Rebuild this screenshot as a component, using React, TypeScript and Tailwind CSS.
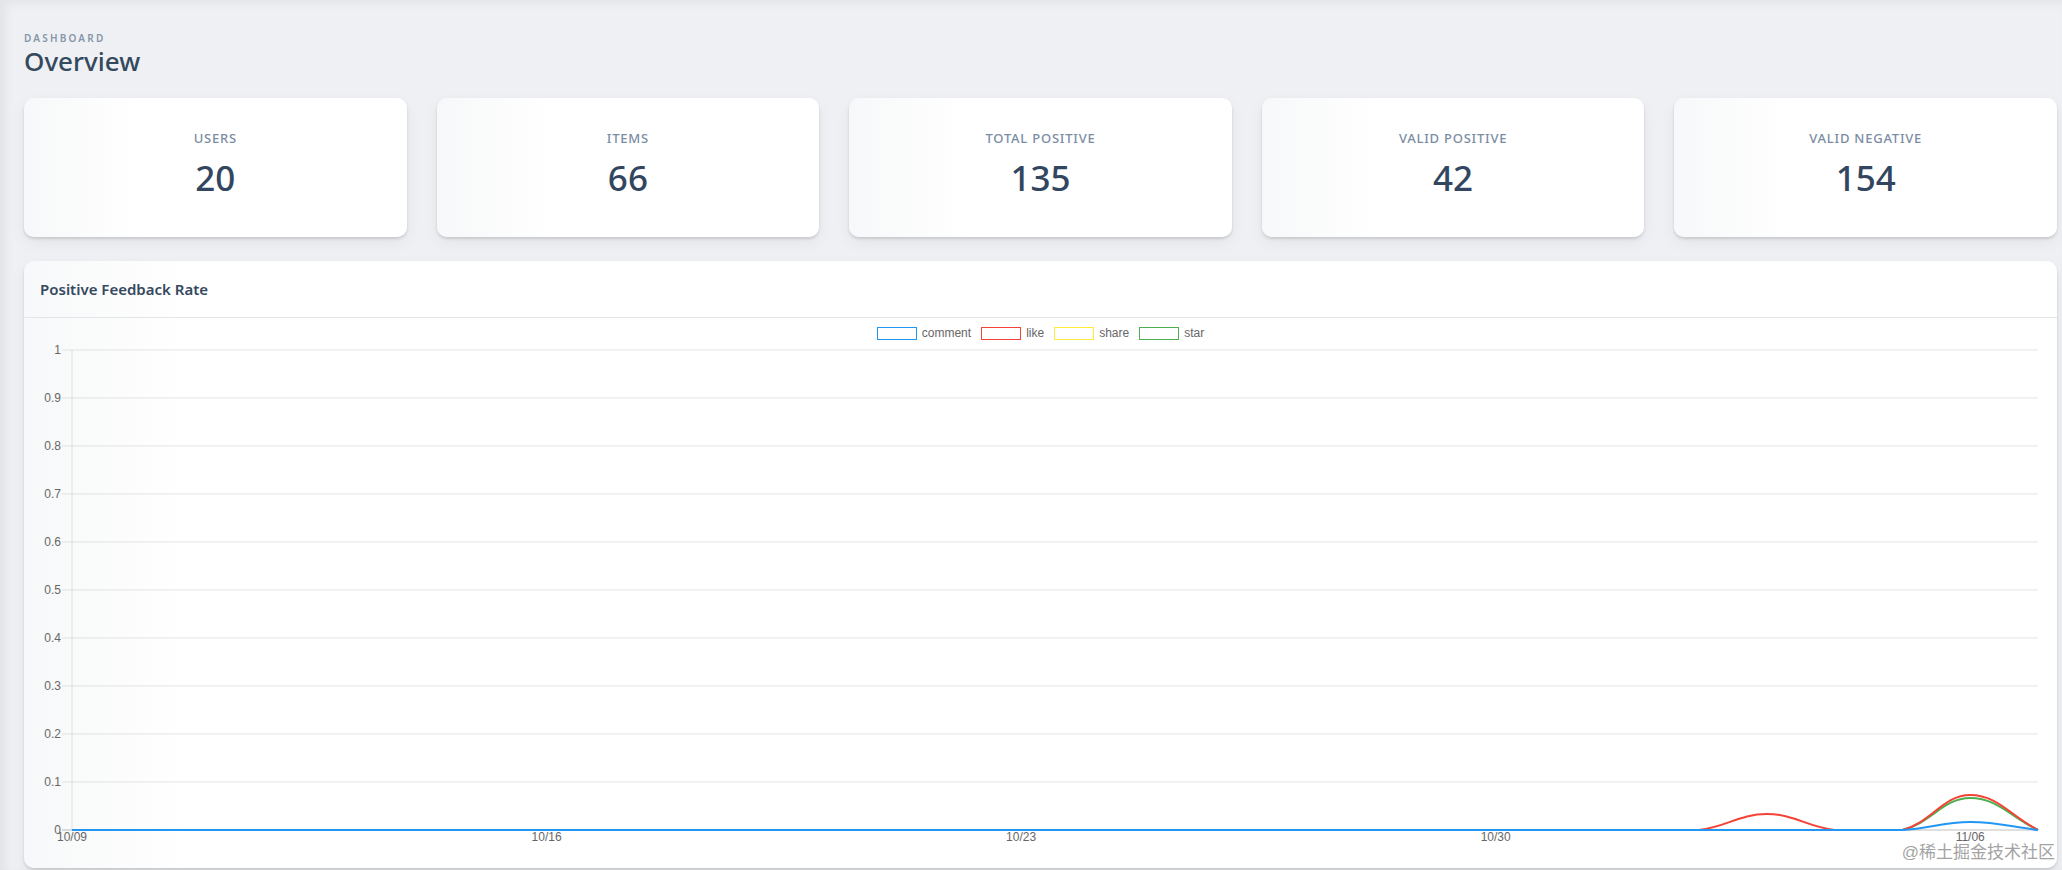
import React from "react";

const STATS = [
  { label: "Users", value: 20 },
  { label: "Items", value: 66 },
  { label: "Total Positive", value: 135 },
  { label: "Valid Positive", value: 42 },
  { label: "Valid Negative", value: 154 },
];

// 10/09 .. 11/07
const DAYS = 30;
const zeros = () => Array.from({ length: DAYS }, () => 0);

const SERIES = [
  { name: "comment", color: "#2196f3", data: (() => { const d = zeros(); d[28] = 0.0167; return d; })() },
  { name: "like", color: "#f44336", data: (() => { const d = zeros(); d[25] = 0.0333; d[28] = 0.073; return d; })() },
  { name: "share", color: "#ffeb3b", data: [] as number[] },
  { name: "star", color: "#4caf50", data: (() => { const d = zeros(); d[28] = 0.0667; return d; })() },
];

const X0 = 48;
const X1 = 2014;
const Y_TOP = 10;
const Y_BOT = 490;
const STEP = (X1 - X0) / (DAYS - 1);

const px = (i: number) => X0 + i * STEP;
const py = (v: number) => Y_BOT - v * (Y_BOT - Y_TOP);

// chart.js style spline, tension .4
function splinePath(values: number[]) {
  if (!values.length) return "";
  const pts = values.map((v, i) => ({ x: px(i), y: py(v) }));
  const t = 0.4;
  const ctrl = pts.map((cur, i) => {
    const prev = pts[i - 1] || cur;
    const next = pts[i + 1] || cur;
    const d01 = Math.hypot(cur.x - prev.x, cur.y - prev.y);
    const d12 = Math.hypot(next.x - cur.x, next.y - cur.y);
    let s01 = d01 / (d01 + d12);
    let s12 = d12 / (d01 + d12);
    if (isNaN(s01)) s01 = 0;
    if (isNaN(s12)) s12 = 0;
    const fa = t * s01;
    const fb = t * s12;
    const clamp = (y: number) => Math.min(Math.max(y, Y_TOP), Y_BOT);
    return {
      px: cur.x - fa * (next.x - prev.x),
      py: clamp(cur.y - fa * (next.y - prev.y)),
      nx: cur.x + fb * (next.x - prev.x),
      ny: clamp(cur.y + fb * (next.y - prev.y)),
    };
  });
  let d = `M${pts[0].x},${pts[0].y}`;
  for (let i = 1; i < pts.length; i++) {
    d += ` C${ctrl[i - 1].nx},${ctrl[i - 1].ny} ${ctrl[i].px},${ctrl[i].py} ${pts[i].x},${pts[i].y}`;
  }
  return d;
}

const X_LABELS = [
  { i: 0, text: "10/09" },
  { i: 7, text: "10/16" },
  { i: 14, text: "10/23" },
  { i: 21, text: "10/30" },
  { i: 28, text: "11/06" },
];

function StatCard({ label, value }: { label: string; value: number }) {
  return (
    <div className="h-[139px] rounded-[10px] bg-[linear-gradient(90deg,#f7f8f9_0%,#ffffff_30%,#ffffff_100%)] shadow-[0_2px_3px_rgba(0,0,0,0.13),0_6px_16px_rgba(0,0,0,0.05)] flex flex-col items-center pt-[32px]">
      <div className="text-[13px] leading-[17px] font-medium uppercase tracking-[0.06em] text-[#7b8ca3]">{label}</div>
      <div className="mt-[11px] text-[35px] leading-[40px] font-medium text-[#32465f]">{value}</div>
    </div>
  );
}

function FeedbackChart() {
  return (
    <svg viewBox="0 0 2033 528" className="w-full h-[528px] block" style={{ fontFamily: "'Liberation Sans', Arial, sans-serif" }}>
      {Array.from({ length: 11 }, (_, k) => {
        const v = k / 10;
        const y = py(v);
        return (
          <g key={k}>
            <line x1={38} x2={X1} y1={y} y2={y} stroke={k === 0 ? "rgba(0,0,0,0.25)" : "rgba(0,0,0,0.1)"} strokeWidth={1} />
            <text x={37} y={y + 4} textAnchor="end" fontSize={12} fill="#666">
              {k === 0 ? "0" : k === 10 ? "1" : v.toFixed(1)}
            </text>
          </g>
        );
      })}
      <line x1={X0} x2={X0} y1={Y_TOP} y2={Y_BOT} stroke="rgba(0,0,0,0.1)" strokeWidth={1} />
      {X_LABELS.map((l) => (
        <text key={l.text} x={px(l.i)} y={501} textAnchor="middle" fontSize={12} fill="#666">
          {l.text}
        </text>
      ))}
      {[...SERIES].reverse().map((s) =>
        s.data.length ? <path key={s.name} d={splinePath(s.data)} fill="none" stroke={s.color} strokeWidth={2} /> : null
      )}
    </svg>
  );
}

export default function App() {
  return (
    <div className="min-h-screen bg-[#eef0f3] shadow-[inset_6px_3px_10px_rgba(0,0,0,0.05)] pl-[24px] pr-[5px] pt-[31px] pb-[2px]" style={{ fontFamily: "'Noto Sans', 'Open Sans', sans-serif" }}>
      <div className="text-[10px] leading-[14px] font-semibold uppercase tracking-[0.22em] text-[#8796aa]">Dashboard</div>
      <h1 className="text-[26px] leading-[32px] font-medium text-[#34495e]">Overview</h1>

      <div className="mt-[21px] grid grid-cols-5 gap-[30px]">
        {STATS.map((s) => (
          <StatCard key={s.label} label={s.label} value={s.value} />
        ))}
      </div>

      <div className="relative mt-[24px] h-[607px] rounded-[10px] bg-[linear-gradient(90deg,#f7f8f9_0%,#ffffff_8%,#ffffff_100%)] shadow-[0_2px_3px_rgba(0,0,0,0.13),0_6px_16px_rgba(0,0,0,0.05)] flex flex-col">
        <div className="h-[57px] border-b border-[#e3e5e8] flex items-center pl-[16px]">
          <span className="text-[15px] font-semibold text-[#34495e]">Positive Feedback Rate</span>
        </div>
        <div className="pt-[9px] flex justify-center gap-[10px] text-[12px] leading-[13px] text-[#666]" style={{ fontFamily: "'Liberation Sans', Arial, sans-serif" }}>
          {SERIES.map((s) => (
            <div key={s.name} className="flex items-center gap-[5px]">
              <span className="w-[40px] h-[13px] border-[1.5px]" style={{ borderColor: s.color }} />
              <span>{s.name}</span>
            </div>
          ))}
        </div>
        <FeedbackChart />
        <div className="absolute right-[2px] bottom-[5px] text-[17px] leading-[20px] text-[#a3a3a3]" style={{ fontFamily: "'Liberation Sans', 'Noto Sans CJK SC', sans-serif" }}>
          @稀土掘金技术社区
        </div>
      </div>
    </div>
  );
}
